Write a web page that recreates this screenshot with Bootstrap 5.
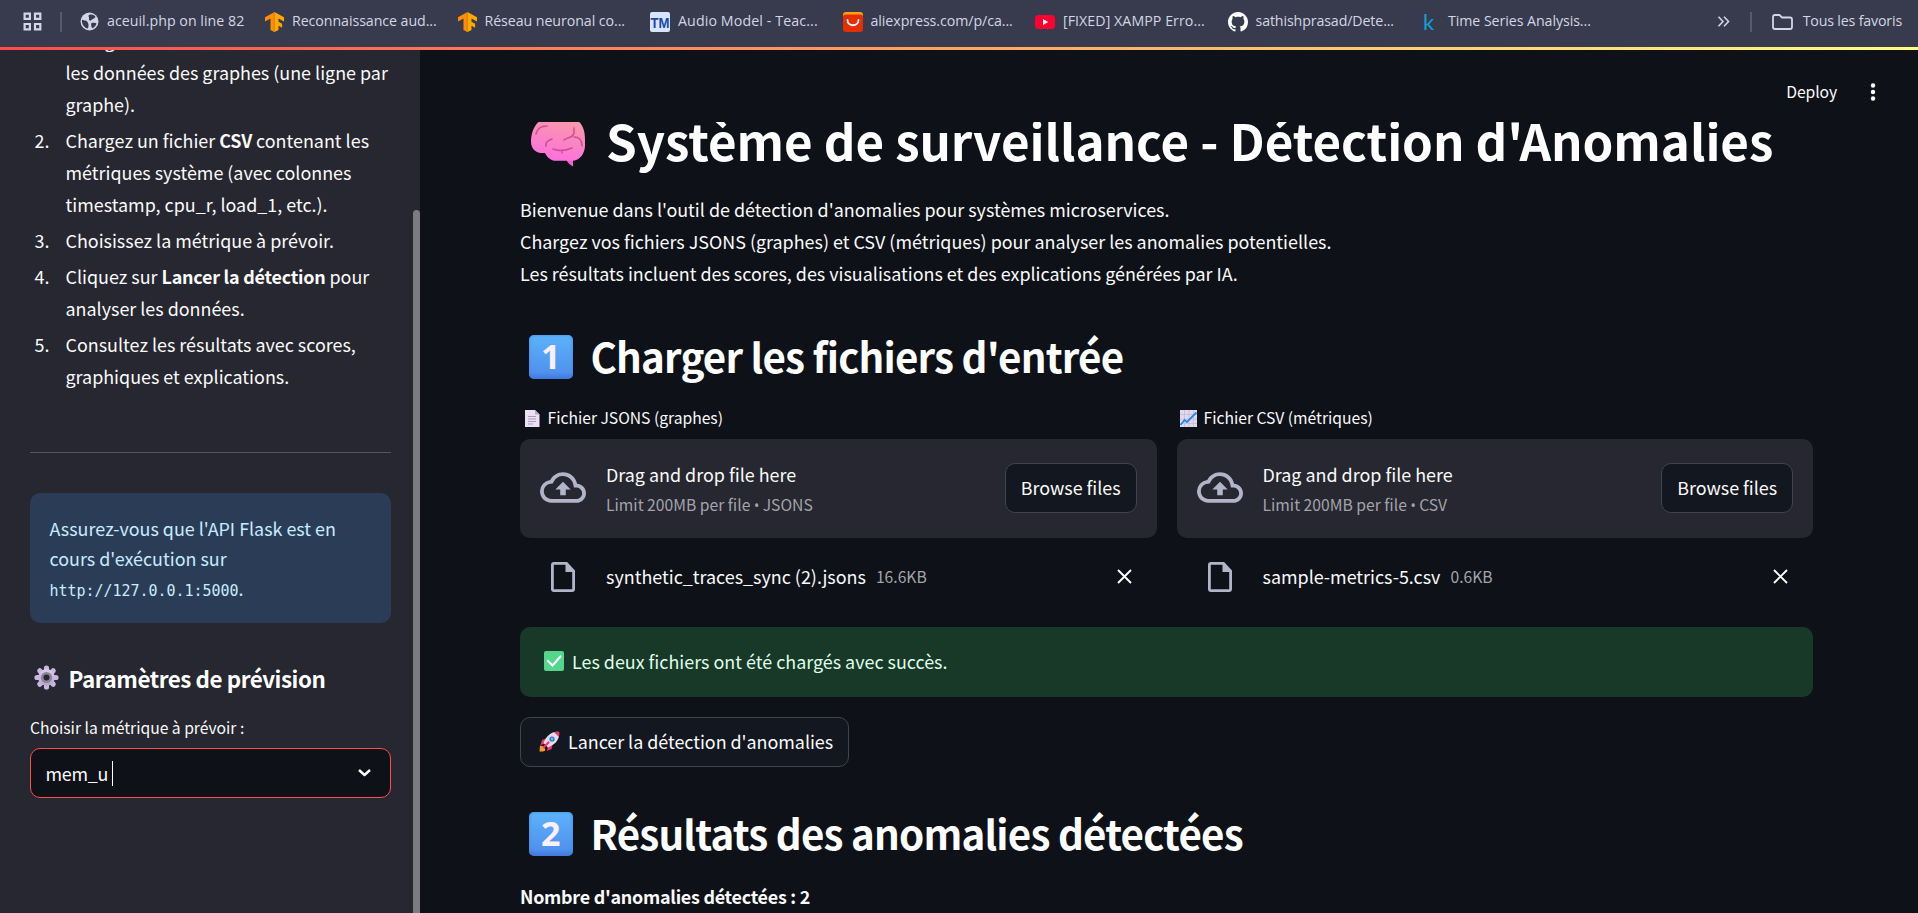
<!DOCTYPE html>
<html lang="fr" data-bs-theme="dark">
<head>
<meta charset="utf-8">
<meta name="viewport" content="width=device-width, initial-scale=1">
<title>Système de surveillance</title>
<link href="https://cdn.jsdelivr.net/npm/bootstrap@5.3.0/dist/css/bootstrap.min.css" rel="stylesheet">
<style>
html,body{height:100%}
body{background:#0e1117;color:#fafafa;font:400 17.92px/32px "Noto Sans CJK SC",sans-serif;overflow:hidden}
svg{display:block;flex:none}
.bookmarks{height:47px;background:#373b4d;font:400 14.2px/20px "Open Sans",sans-serif;color:#d3d6e4;padding:0 16px 4px 23px}
.bookmarks span{white-space:nowrap;position:relative;top:-1px;letter-spacing:-.06px}
.bm{width:192.5px;gap:8px}
.bm.first-bm{width:185px}
.vsep{width:2px;height:20px;background:#555a6d}
.glow{height:3px;flex:none;background:linear-gradient(90deg,#ff4b4b,#fffd80)}
.side{width:420px;flex:none;background:#262730}
.side-in{width:413px;padding:0 22px 0 30px}
.scroll-track{width:7px;padding-top:160px}
.scroll-thumb{height:100%;background:#7c7b82;border-radius:4px 4px 0 0}
.steps{list-style:none;margin:-25.8px 0 0;padding:0}
.steps li{display:flex;margin-bottom:4px;white-space:nowrap}
.steps b{display:block;font-weight:400;width:31px;margin-left:4.500px}
.steps strong{letter-spacing:-.22px}
.rule{height:1px;background:#53545d;margin-top:60px}
.info{margin-top:40px;height:130px;border-radius:10px;background:#2b3d56;color:#c7ebff;padding:19.500px 19.500px 0;line-height:30px}
.info code{font:15px "DejaVu Sans Mono",monospace;color:inherit;letter-spacing:-.03px}
.params{height:34px;margin-top:37.500px;padding-left:4px;gap:9.500px}
.h-set{font-size:22.4px;line-height:30px;font-weight:700;margin:0;letter-spacing:-.45px}
.lbl{font-size:15.7px;line-height:26px;letter-spacing:-.02px}
.pick{height:50px;border:1px solid #ff4b4b;border-radius:10px;background:#0e1117;padding:0 19px 0 14.500px;margin-top:7px;letter-spacing:-.3px}
.caret{width:1px;height:25px;background:#fff;margin-left:4.500px}
.toolbar{height:72px;padding:29.2px 42px 0 0;font-size:15.7px;line-height:26px;gap:33px;letter-spacing:-.1px}
.body-col{width:1293px;margin-left:100px}
h1.title{font-size:49.3px;line-height:35px;font-weight:700;margin:0;height:71.2px;overflow:hidden;white-space:nowrap;letter-spacing:-.05px}
.h1-text{margin-left:-2px}
h2.sect{font-size:40.3px;line-height:54px;font-weight:700;margin:0;white-space:nowrap;letter-spacing:-.81px}
.keycap{width:44.5px;height:44px;margin:6px 17.500px 0 8.500px;border-radius:5px;background:linear-gradient(#5cb3fb,#4f92ee 85%,#4277dd);box-shadow:inset 0 0 3px #3f83e0;color:#fbeffd;font:700 34px/42px "Open Sans",sans-serif;letter-spacing:0;text-align:center}
.up-grid{display:grid;grid-template-columns:1fr 1fr;column-gap:20px;margin-top:22.500px}
.drop{height:99px;border-radius:10px;background:#262730;padding:0 20px;margin-top:7.500px}
.drop-text{margin-left:20px;padding-top:1px}
.drop-text>div:first-child{height:32px}
.dim{color:#a3a4ab;font-size:15.7px;line-height:29px;letter-spacing:0}
.dot{font-family:"Noto Sans",sans-serif;font-size:14px}
.btn.st{background:#131720;border:1px solid #41444c;border-radius:10px;color:#fafafa;font-size:17.92px;line-height:32px;height:50px;padding:7px 15px 9px;white-space:nowrap;letter-spacing:-.03px}
.drop .btn.st{margin-bottom:1px}
.frow{height:50px;margin-top:14px;padding:0 25px 0 31px}
.frow span{position:relative;top:-.5px}
.ok{height:70px;margin-top:25.500px;border-radius:10px;background:#183828;color:#dffde9;padding:0 0 2px 24px;gap:8px}
</style>
</head>
<body class="d-flex flex-column">
<nav class="bookmarks d-flex align-items-center flex-shrink-0">
  <svg width="19" height="19" viewBox="0 0 19 19" fill="none" stroke="#d3d6e4" stroke-width="2.2"><path d="M1.6 1.6h5.3v5.3H1.6zM12 1.6h5.3v5.3H12zM1.6 12h5.3v5.3H1.6zM12 12h5.3v5.3H12z"/></svg>
  <div class="vsep" style="margin-left:18px;margin-right:18px"></div>
  <div class="bm first-bm d-flex align-items-center"><svg width="19" height="19" viewBox="0 0 19 19"><circle cx="9.5" cy="9.5" r="9" fill="#d3d6e4"/><path d="M2 7.5c2.5 1.5 4.5.5 5.5 2.5s1.5 2.5.5 6.500C4 16 1.500 12 2 7.500zM9 3c2-1 5-.5 6.500 2-1 2-3 1.500-4 3s-3 .5-2.500-1.500S7.500 4.500 9 3zM11.500 11c2-.8 4.500 0 5 .5-.5 2-2 4-4.500 4.800-.5-2-1.500-4-.5-5.300z" fill="#373b4d"/></svg><span style="letter-spacing:.03px">aceuil.php on line 82</span></div>
  <div class="bm d-flex align-items-center"><svg width="19" height="20" viewBox="0 0 19 20"><path d="M9.500 0L0 5.300v4.200L5.500 6.500V18l4 2z" fill="#ff8f00"/><path d="M9.500 0L19 5.300v4.200l-5.500-3v3.200l3.600 2v4l-3.600-2V18l-4 2z" fill="#ffa800"/><path d="M8.500 1h1.500v19H8.500z" fill="#e68500"/></svg><span style="letter-spacing:-.06px">Reconnaissance aud...</span></div>
  <div class="bm d-flex align-items-center"><svg width="19" height="20" viewBox="0 0 19 20"><path d="M9.500 0L0 5.300v4.200L5.500 6.500V18l4 2z" fill="#ff8f00"/><path d="M9.500 0L19 5.300v4.200l-5.500-3v3.200l3.600 2v4l-3.600-2V18l-4 2z" fill="#ffa800"/><path d="M8.500 1h1.500v19H8.500z" fill="#e68500"/></svg><span>Réseau neuronal co...</span></div>
  <div class="bm d-flex align-items-center"><svg width="20" height="20" viewBox="0 0 20 20"><rect width="20" height="20" rx="2" fill="#d6e4fc"/><text x="10" y="15.500" text-anchor="middle" textLength="19" lengthAdjust="spacingAndGlyphs" font-family="Liberation Sans" font-weight="700" font-size="15" fill="#1b47a8">TM</text></svg><span style="letter-spacing:.12px">Audio Model - Teac...</span></div>
  <div class="bm d-flex align-items-center"><svg width="20" height="20" viewBox="0 0 20 20"><rect width="20" height="12" rx="3" fill="#ffa200"/><path d="M0 5q0-2.500 2.500-2.500h15Q20 2.500 20 5v12q0 3-3 3H3q-3 0-3-3z" fill="#e62e04"/><path d="M4.500 8c0 7 11 7 11 0" fill="none" stroke="#fff" stroke-width="1.800" stroke-linecap="round"/></svg><span>aliexpress.com/p/ca...</span></div>
  <div class="bm d-flex align-items-center"><svg width="20" height="14" viewBox="0 0 20 14"><rect width="20" height="14" rx="3.500" fill="#ff0033"/><path d="M8 4l5.200 3L8 10z" fill="#fff"/></svg><span style="letter-spacing:.06px">[FIXED] XAMPP Erro...</span></div>
  <div class="bm d-flex align-items-center"><svg width="20" height="20" viewBox="0 0 16 16" fill="#fff"><path d="M8 0C3.580 0 0 3.580 0 8c0 3.540 2.290 6.530 5.470 7.590.4.070.55-.17.55-.38 0-.19-.01-.82-.01-1.490-2.010.37-2.530-.49-2.690-.94-.09-.23-.48-.94-.82-1.130-.28-.15-.68-.52-.01-.53.63-.01 1.080.58 1.230.82.72 1.210 1.870.87 2.330.66.07-.52.28-.87.51-1.070-1.780-.2-3.640-.89-3.640-3.950 0-.87.31-1.590.82-2.150-.08-.2-.36-1.020.08-2.120 0 0 .67-.21 2.200.82.64-.18 1.320-.27 2-.27s1.360.09 2 .27c1.530-1.040 2.200-.82 2.200-.82.44 1.100.16 1.920.08 2.120.51.56.82 1.270.82 2.150 0 3.070-1.870 3.750-3.650 3.950.29.25.54.73.54 1.480 0 1.070-.01 1.930-.01 2.200 0 .21.15.46.55.38A8.010 8.010 0 0 0 16 8c0-4.420-3.580-8-8-8z"/></svg><span style="letter-spacing:-.11px">sathishprasad/Dete...</span></div>
  <div class="bm d-flex align-items-center"><svg width="20" height="20" viewBox="0 0 20 20"><text x="3" y="17.500" font-family="Lato" font-size="22" fill="#12a0d8">k</text></svg><span>Time Series Analysis...</span></div>
  <svg class="ms-auto" width="13" height="11" viewBox="0 0 13 11" fill="none" stroke="#d3d6e4" stroke-width="1.600"><path d="M1.500.8L6 5.500 1.500 10.200M7 .8l4.500 4.700L7 10.200"/></svg>
  <div class="vsep" style="margin:0 20px"></div>
  <svg width="21" height="16" viewBox="0 0 21 16" fill="none" stroke="#d3d6e4" stroke-width="1.800"><path d="M1 3q0-2 2-2h4.500l2.500 2.500h8q2 0 2 2V13q0 2-2 2H3q-2 0-2-2z"/></svg>
  <span style="margin-left:10px;letter-spacing:-.16px">Tous les favoris</span>
</nav>
<div class="glow"></div>
<div class="d-flex flex-grow-1 overflow-hidden">
  <aside class="side d-flex overflow-hidden">
    <div class="side-in">
      <ol class="steps">
        <li><b></b><div>Chargez un fichier JSONS contenant<br>les données des graphes (une ligne par<br>graphe).</div></li>
        <li><b>2.</b><div>Chargez un fichier <strong>CSV</strong> contenant les<br>métriques système (avec colonnes<br>timestamp, cpu_r, load_1, etc.).</div></li>
        <li><b>3.</b><div>Choisissez la métrique à prévoir.</div></li>
        <li><b>4.</b><div>Cliquez sur <strong>Lancer la détection</strong> pour<br>analyser les données.</div></li>
        <li><b>5.</b><div>Consultez les résultats avec scores,<br>graphiques et explications.</div></li>
      </ol>
      <div class="rule"></div>
      <div class="info">Assurez-vous que l'API Flask est en<br>cours d'exécution sur<br><code>http://127.0.0.1:5000</code>.</div>
      <div class="params d-flex align-items-center">
        <svg width="25" height="25" viewBox="-12.500 -12.500 25 25"><defs><linearGradient id="gg" x1="0" y1="0" x2="0" y2="1"><stop offset="0" stop-color="#ddcdf0"/><stop offset="1" stop-color="#b7a2cc"/></linearGradient></defs><g stroke="#c9b8de" stroke-width="5.200" stroke-linecap="round"><path d="M0-9.500V9.500M-9.500 0H9.500M-6.700-6.700L6.700 6.700M-6.700 6.700L6.700-6.700"/></g><circle r="8.300" fill="url(#gg)"/><circle r="5.600" fill="#8d8498"/><circle r="3" fill="#262730"/></svg>
        <h3 class="h-set">Paramètres de prévision</h3>
      </div>
      <div class="lbl" style="margin-top:20.500px">Choisir la métrique à prévoir :</div>
      <div class="pick d-flex align-items-center">mem_u<div class="caret"></div><svg class="ms-auto" width="13" height="8" viewBox="0 0 13 8" fill="none" stroke="#fff" stroke-width="2.400" stroke-linejoin="round"><path d="M1 1l5.500 5L12 1"/></svg></div>
    </div>
    <div class="scroll-track"><div class="scroll-thumb"></div></div>
  </aside>
  <main class="flex-grow-1">
    <div class="toolbar d-flex justify-content-end">Deploy<svg style="margin-top:4px" width="6" height="18" viewBox="0 0 6 18" fill="#fff"><circle cx="3" cy="2.500" r="2.200"/><circle cx="3" cy="9" r="2.200"/><circle cx="3" cy="15.500" r="2.200"/></svg></div>
    <div class="body-col">
      <h1 class="title d-flex">
        <svg width="88" height="45" viewBox="0 7 88 45"><defs><linearGradient id="br" x1=".7" y1="0" x2=".4" y2="1"><stop offset="0" stop-color="#f99ba8"/><stop offset=".5" stop-color="#fa85c4"/><stop offset="1" stop-color="#ff6fe0"/></linearGradient></defs><path d="M45.500 43H53v8.500c-3.500-1.500-6-4.500-7.500-8.500z" fill="#f25fd2"/><path d="M24 4h31c7 4 10 12 10 23v7c0 9-5 18-13 18H36c-5 0-9-4-11-9-8 1-14-4-14-13C11 19 15 7 24 4z" transform="matrix(1 0 0 .87 0 .6)" fill="url(#br)"/><g fill="none" stroke="#d24f92" stroke-width="1.600" stroke-linecap="round"><path d="M16 19c1-5 5-8 11-8"/><path d="M26 31c-1-4 3-6 6-7M44 25c4-3 9-2 10-7M54 18v-5M54 22c6 0 8 4 8 9M33 34c5 2 12 2 19-1M42 35v3"/></g></svg>
        <span class="h1-text">Système de surveillance - Détection d'Anomalies</span></h1>
      <div>Bienvenue dans l'outil de détection d'anomalies pour systèmes microservices.<br>Chargez vos fichiers JSONS (graphes) et CSV (métriques) pour analyser les anomalies potentielles.<br>Les résultats incluent des scores, des visualisations et des explications générées par IA.</div>
      <h2 class="sect d-flex" style="margin-top:39.500px"><span class="keycap">1</span>Charger les fichiers d'entrée</h2>
      <div class="up-grid">
        <section>
          <div class="lbl d-flex align-items-center"><svg style="margin:0 8px 0 5px" width="14.500" height="17" viewBox="0 0 14.500 17"><path d="M0 0h10l4.500 4.500V17H0z" fill="#ebe0f5"/><path d="M10 0l4.500 4.500H10z" fill="#b9a8c9"/><path d="M3 6.500h8M3 9h8M3 11.500h8M3 14h5" stroke="#a99fb5" stroke-width="1"/></svg>Fichier JSONS (graphes)</div>
          <div class="drop d-flex align-items-center">
            <svg width="46" height="32" viewBox="0 0 24 16.500" fill="#b2b5c9"><path d="M19.350 6.040A7.490 7.490 0 0 0 12 0C9.110 0 6.600 1.640 5.350 4.040A5.994 5.994 0 0 0 0 10c0 3.310 2.690 6 6 6h13c2.760 0 5-2.240 5-5 0-2.640-2.050-4.780-4.650-4.960zM19 14H6c-2.210 0-4-1.790-4-4 0-2.050 1.530-3.760 3.560-3.970l1.070-.11.500-.95A5.469 5.469 0 0 1 12 2c2.620 0 4.880 1.860 5.390 4.430l.3 1.500 1.530.11A2.980 2.980 0 0 1 22 11c0 1.650-1.350 3-3 3z"/><path d="M8 9h2.550v3h2.900V9H16l-4-4z"/></svg>
            <div class="drop-text"><div>Drag and drop file here</div><div class="dim">Limit 200MB per file <span class="dot">•</span> JSONS</div></div>
            <button class="btn st ms-auto">Browse files</button>
          </div>
          <div class="frow d-flex align-items-center">
            <svg width="24" height="30" viewBox="0 0 24 30" fill="none" stroke="#b2b5c9" stroke-width="2.800"><path d="M3 1.400h12.500L22.600 9V27q0 1.600-1.600 1.600H3q-1.600 0-1.600-1.600V3Q1.400 1.400 3 1.400z"/><path d="M14.500 1v9H23z" fill="#b2b5c9" stroke="none"/></svg>
            <span style="margin-left:31px">synthetic_traces_sync (2).jsons</span><span class="dim" style="margin-left:10px">16.6KB</span>
            <svg class="ms-auto" width="15" height="15" viewBox="0 0 15 15" stroke="#fff" stroke-width="1.900"><path d="M1 1l13 13M14 1L1 14"/></svg>
          </div>
        </section>
        <section>
          <div class="lbl d-flex align-items-center"><svg style="margin:0 7px 0 3px" width="17" height="17" viewBox="0 0 17 17"><path d="M0 0h17v17H0z" fill="#e3d9ef"/><path d="M4.500 0v17M9 0v17M13.500 0v17M0 4.500h17M0 9h17M0 13.500h17" stroke="#c5bad4" stroke-width=".8"/><path d="M.5 15l4-5 2.500 2L16.500 2.500" fill="none" stroke="#1d8be0" stroke-width="1.800"/></svg>Fichier CSV (métriques)</div>
          <div class="drop d-flex align-items-center">
            <svg width="46" height="32" viewBox="0 0 24 16.500" fill="#b2b5c9"><path d="M19.350 6.040A7.490 7.490 0 0 0 12 0C9.110 0 6.600 1.640 5.350 4.040A5.994 5.994 0 0 0 0 10c0 3.310 2.690 6 6 6h13c2.760 0 5-2.240 5-5 0-2.640-2.050-4.780-4.650-4.960zM19 14H6c-2.210 0-4-1.790-4-4 0-2.050 1.530-3.760 3.560-3.970l1.070-.11.500-.95A5.469 5.469 0 0 1 12 2c2.620 0 4.880 1.860 5.390 4.430l.3 1.500 1.530.11A2.980 2.980 0 0 1 22 11c0 1.650-1.350 3-3 3z"/><path d="M8 9h2.550v3h2.900V9H16l-4-4z"/></svg>
            <div class="drop-text"><div>Drag and drop file here</div><div class="dim">Limit 200MB per file <span class="dot">•</span> CSV</div></div>
            <button class="btn st ms-auto">Browse files</button>
          </div>
          <div class="frow d-flex align-items-center">
            <svg width="24" height="30" viewBox="0 0 24 30" fill="none" stroke="#b2b5c9" stroke-width="2.800"><path d="M3 1.400h12.500L22.600 9V27q0 1.600-1.600 1.600H3q-1.600 0-1.600-1.600V3Q1.400 1.400 3 1.400z"/><path d="M14.500 1v9H23z" fill="#b2b5c9" stroke="none"/></svg>
            <span style="margin-left:31px">sample-metrics-5.csv</span><span class="dim" style="margin-left:10px">0.6KB</span>
            <svg class="ms-auto" width="15" height="15" viewBox="0 0 15 15" stroke="#fff" stroke-width="1.900"><path d="M1 1l13 13M14 1L1 14"/></svg>
          </div>
        </section>
      </div>
      <div class="ok d-flex align-items-center"><svg width="20" height="20" viewBox="0 0 20 20"><rect width="20" height="20" rx="2" fill="#55d68c"/><path d="M4 10l4.500 4.500L16.500 5.500" fill="none" stroke="#fff" stroke-width="2.200" stroke-linecap="round"/></svg><span>Les deux fichiers ont été chargés avec succès.</span></div>
      <button class="btn st d-flex align-items-center" style="margin-top:20px;padding-left:18px;gap:8px"><svg width="21" height="21" viewBox="0 0 21 21"><path d="M1 14.500l4 1 1.500 4L4 20.500H.5z" fill="#ff9a2e"/><path d="M8 7l-5 2-1.500 5 5-1.500zM14 12l-1.500 6-4.500 2 1-6z" fill="#f0356b"/><path d="M20 1c1 7-3 12-11 15.500L4.500 12C8 4 13 0 20 1z" fill="#e3dbee"/><path d="M20.200.8c.3 2 .1 3.500-.4 5L15 1.200C16.500.6 18.200.5 20.200.8z" fill="#f0356b"/><circle cx="13" cy="8" r="2.600" fill="#2f6fb8"/><circle cx="13" cy="8" r="1.400" fill="#5cc0f5"/><path d="M9.500 11.500L5 16" stroke="#f0356b" stroke-width="2.200" stroke-linecap="round"/></svg><span>Lancer la détection d'anomalies</span></button>
      <h2 class="sect d-flex" style="margin-top:38.500px"><span class="keycap">2</span>Résultats des anomalies détectées</h2>
      <div class="fw-bold" style="margin-top:20px;letter-spacing:-.26px">Nombre d'anomalies détectées : 2</div>
    </div>
  </main>
</div>
<script src="https://cdn.jsdelivr.net/npm/bootstrap@5.3.0/dist/js/bootstrap.bundle.min.js"></script>
</body>
</html>
